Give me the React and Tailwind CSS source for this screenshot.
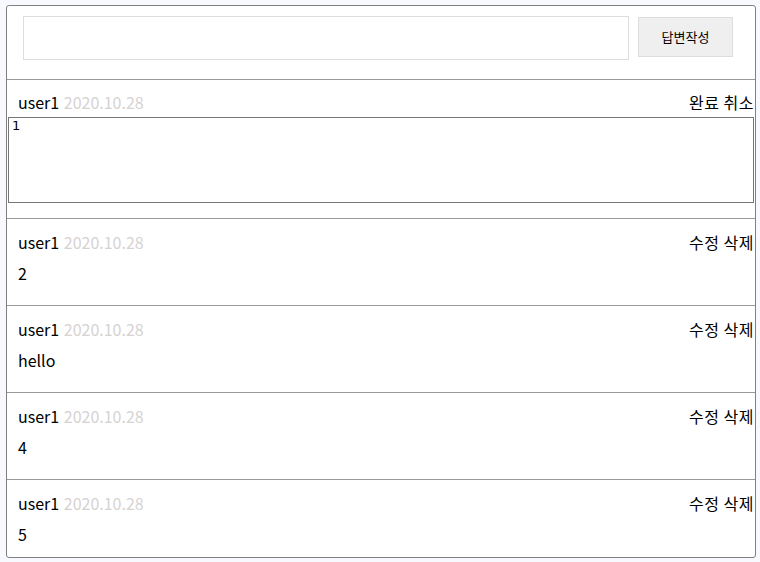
import React from "react";

const font = { fontFamily: '"Noto Sans CJK KR", "Noto Sans", sans-serif' };

function Header({ actions }) {
  return (
    <div className="flex h-6 items-center justify-between pl-[11px] pr-[1px] text-[16px] leading-6">
      <div>
        <span className="text-black">user1</span>{" "}
        <span className="ml-px text-[#d6d2d2]">2020.10.28</span>
      </div>
      <div className="tracking-[0.5px] text-black">{actions}</div>
    </div>
  );
}

function Comment({ body, last }) {
  return (
    <div className={"pt-[11px] pb-[20px] " + (last ? "" : "border-b border-[#999]")}>
      <Header actions="수정 삭제" />
      <div className="mt-[7px] h-6 pl-[11px] text-[16px] leading-6 text-black">{body}</div>
    </div>
  );
}

export default function App() {
  return (
    <div className="min-h-screen bg-[#f8f9fe] pt-[5px] pl-[6px]" style={font}>
      <div className="h-[553px] w-[750px] overflow-hidden rounded-[3px] border border-[#808080] bg-white">
        <div className="flex items-start border-b border-[#999] pt-[10px] pr-[22px] pb-[19px] pl-[16px]">
          <input className="h-[44px] w-[606px] border border-[#ddd] outline-none" />
          <button className="mt-px ml-[9px] h-[40px] w-[95px] border border-[#ddd] bg-[#efefef] text-[13px] text-black">
            답변작성
          </button>
        </div>
        <div className="border-b border-[#999] pt-[10px] pb-[15px]">
          <Header actions="완료 취소" />
          <div className="mt-[3px] px-[1px]">
            <textarea
              className="block h-[86px] w-full resize-none border border-[#767676] px-[3px] py-0 text-[13px] leading-[16px] outline-none"
              style={{ fontFamily: '"DejaVu Sans", sans-serif' }}
              defaultValue="1"
            />
          </div>
        </div>
        <Comment body="2" />
        <Comment body="hello" />
        <Comment body="4" />
        <Comment body="5" last />
      </div>
    </div>
  );
}
